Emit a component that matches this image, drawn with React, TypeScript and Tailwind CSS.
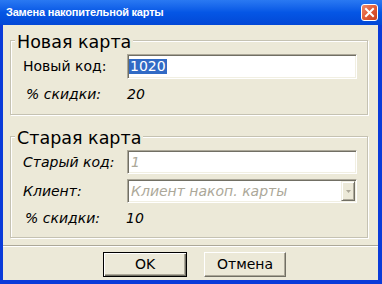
import React from "react";

const sunken =
  "border border-t-[#ACA899] border-l-[#ACA899] border-b-white border-r-white shadow-[inset_1px_1px_0_#716F64,inset_-1px_-1px_0_#F1EFE2] bg-white";

function GroupLegend({ children }: { children: React.ReactNode }) {
  return (
    <span className="absolute left-[4px] top-[-8px] px-[2px] bg-[#ECE9D8] text-[17.5px] leading-[18px] text-black">
      {children}
    </span>
  );
}

export default function App() {
  return (
    <div className="w-[382px] h-[284px] flex flex-col bg-[#0A3BD9] font-['DejaVu_Sans',Verdana,sans-serif] select-none overflow-hidden">
      {/* title bar */}
      <div className="h-[25px] shrink-0 flex items-center pl-[6px] pr-[4px] bg-gradient-to-b from-[#2A79F2] via-[#0556E5] to-[#0348D6]">
        <span className="flex-1 text-white text-[11px] font-bold tracking-[-0.2px] font-['Liberation_Sans',Arial,sans-serif]">
          Замена накопительной карты
        </span>
        <div className="w-[17px] h-[17px] rounded-[3px] border border-white bg-gradient-to-br from-[#F08A6A] via-[#E15B36] to-[#C8411E] flex items-center justify-center">
          <svg width="11" height="11" viewBox="0 0 11 11">
            <path d="M2 2 L9 9 M9 2 L2 9" stroke="white" strokeWidth="2" strokeLinecap="square" />
          </svg>
        </div>
      </div>

      {/* client area */}
      <div className="flex-1 ml-[3px] mr-[4px] mb-[4px] bg-[#ECE9D8] flex flex-col text-[14px] text-black">
        {/* new card */}
        <div className="relative mt-[15px] ml-[7px] w-[358px] h-[75px] border border-[#C5C2B2] shadow-[1px_1px_0_white,inset_1px_1px_0_white]">
          <GroupLegend>Новая карта</GroupLegend>
          <div className="flex items-center mt-[13px] h-[25px]">
            <span className="w-[104px] ml-[12px]">Новый код:</span>
            <div className={`w-[230px] h-[25px] flex items-center pl-[1px] ${sunken}`}>
              <span className="bg-[#316AC5] text-white leading-[15px] px-[1px]">1020</span>
            </div>
          </div>
          <div className="flex items-center mt-[5px] h-[20px] italic">
            <span className="w-[101px] ml-[15px]">% скидки:</span>
            <span>20</span>
          </div>
        </div>

        {/* old card */}
        <div className="relative mt-[21px] ml-[7px] w-[358px] h-[102px] border border-[#C5C2B2] shadow-[1px_1px_0_white,inset_1px_1px_0_white]">
          <GroupLegend>Старая карта</GroupLegend>
          <div className="flex items-center mt-[13px] h-[24px] italic">
            <span className="w-[104px] ml-[12px]">Старый код:</span>
            <div className={`w-[230px] h-[24px] flex items-center pl-[3px] text-[#ACA899] ${sunken}`}>1</div>
          </div>
          <div className="flex items-center mt-[5px] h-[24px] italic">
            <span className="w-[104px] ml-[12px]">Клиент:</span>
            <div className={`w-[230px] h-[24px] flex items-center pl-[3px] pr-[1px] text-[#ACA899] ${sunken}`}>
              <span className="flex-1 whitespace-nowrap">Клиент накоп. карты</span>
              <div className="w-[14px] h-[20px] shrink-0 bg-[#ECE9D8] border border-t-[#F1EFE2] border-l-[#F1EFE2] border-b-[#716F64] border-r-[#716F64] shadow-[inset_1px_1px_0_white,inset_-1px_-1px_0_#ACA899] flex items-center justify-center">
                <svg width="5" height="3" viewBox="0 0 5 3">
                  <path d="M0 0 H5 L2.5 3 Z" fill="#ACA899" />
                </svg>
              </div>
            </div>
          </div>
          <div className="flex items-center mt-[5px] h-[20px] italic">
            <span className="w-[101px] ml-[14px]">% скидки:</span>
            <span>10</span>
          </div>
        </div>

        {/* separator */}
        <div className="mt-[7px] h-[2px] border-t border-[#ACA899] border-b border-b-white" />

        {/* buttons */}
        <div className="flex mt-[5px] ml-[100px] gap-[17px] text-[14px]">
          <button className="w-[84px] h-[25px] bg-[#ECE9D8] border border-black shadow-[inset_1px_1px_0_white,inset_-1px_-1px_0_#716F64,inset_-2px_-2px_0_#ACA899] flex items-center justify-center">
            OK
          </button>
          <button className="w-[82px] h-[25px] bg-[#ECE9D8] border border-t-white border-l-white border-b-[#716F64] border-r-[#716F64] shadow-[inset_-1px_-1px_0_#ACA899] flex items-center justify-center">
            Отмена
          </button>
        </div>
      </div>
    </div>
  );
}
